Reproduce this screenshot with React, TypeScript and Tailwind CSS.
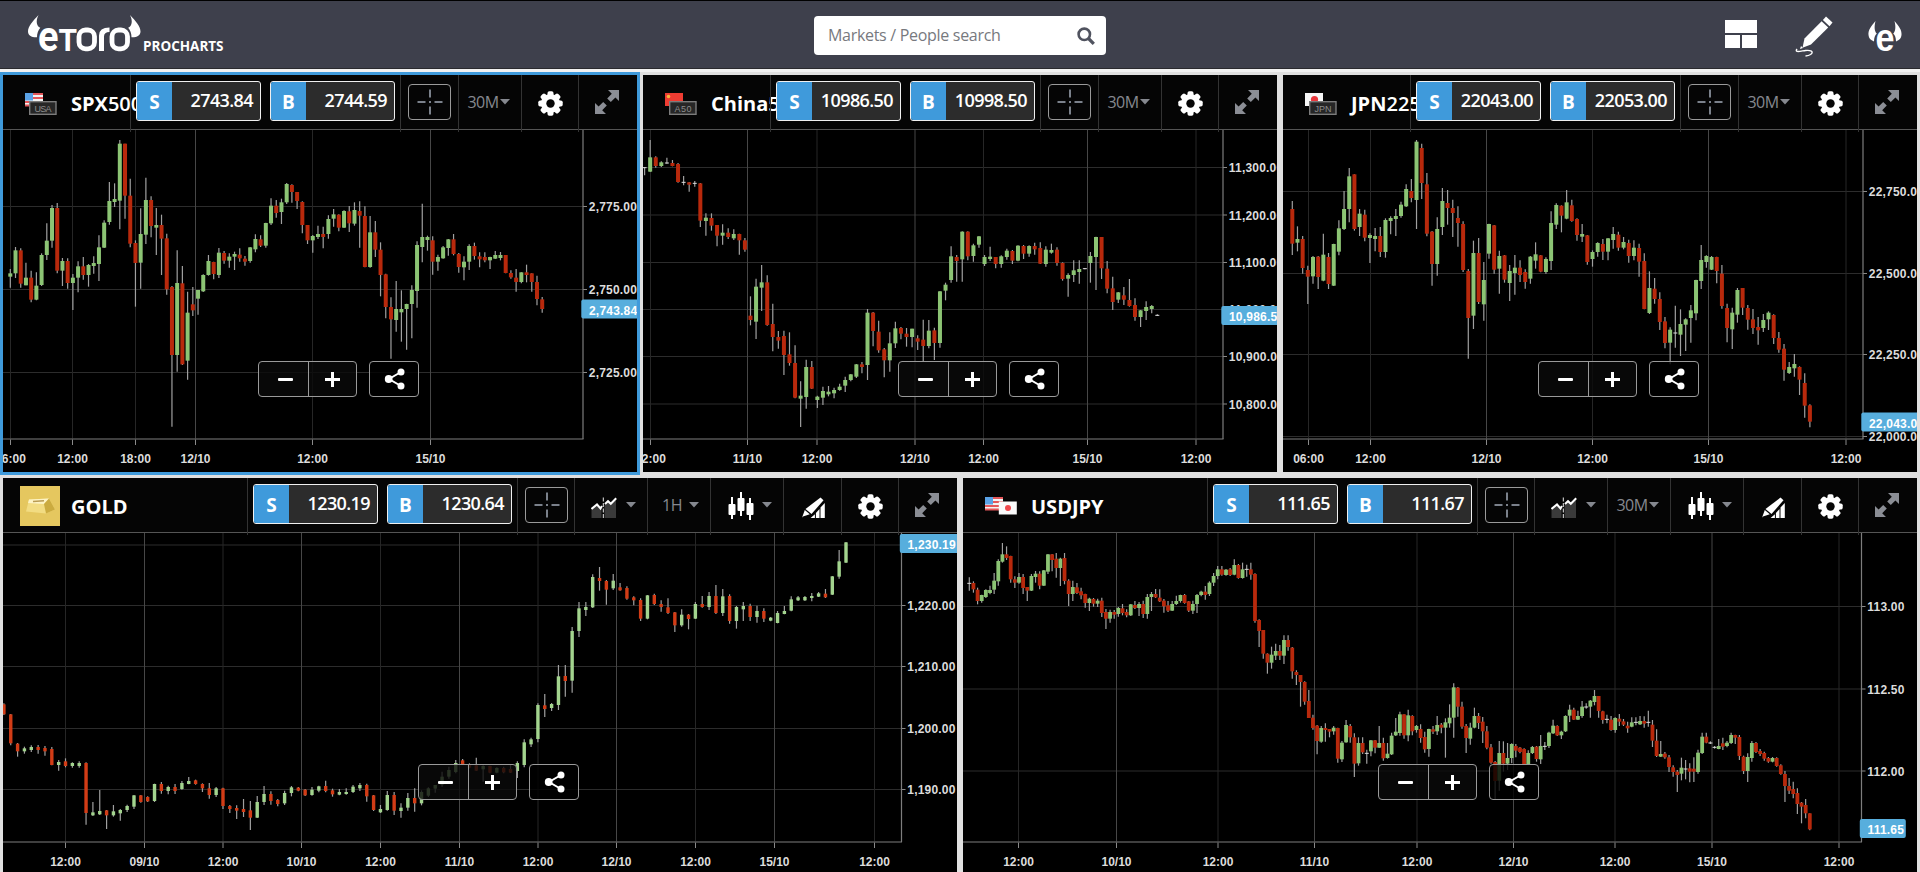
import React from 'react';

// [high, open, close, low] measured downwards, three units per pixel
type Candle = [number, number, number, number];

interface Tick {
  pos: number;
  label: string;
  strong?: boolean;
}

interface ChartData {
  candles: Candle[];
  from: number;
  to: number;
  bodyWidth: number;
  up: string;
  down: string;
  origin: number;
  axisX: number;
  axisY: number;
  times: Tick[];
  prices: Tick[];
  last: { y: number; label: string; width: number };
}

const spxCandles: Candle[] = [
  [417, 440, 430, 473], [351, 430, 361, 444], [355, 361, 461, 473], [398, 466, 443, 466], [422, 443, 509, 517],
  [427, 509, 467, 511], [370, 465, 375, 468], [280, 375, 332, 390], [225, 332, 234, 353], [219, 234, 422, 430],
  [384, 422, 393, 468], [385, 393, 459, 476], [432, 459, 443, 540], [394, 443, 409, 487], [381, 409, 435, 449],
  [402, 435, 405, 470], [379, 408, 399, 431], [316, 402, 352, 453], [271, 353, 278, 354], [156, 276, 213, 284],
  [160, 216, 207, 231], [30, 212, 41, 298], [41, 41, 197, 266], [146, 197, 341, 352], [331, 339, 399, 530],
  [235, 398, 312, 476], [143, 314, 210, 342], [199, 210, 288, 322], [234, 293, 285, 375], [254, 285, 326, 435],
  [311, 325, 478, 494], [468, 471, 675, 890], [361, 675, 459, 725], [408, 460, 703, 705], [485, 692, 548, 749],
  [471, 523, 541, 558], [480, 506, 480, 554], [433, 484, 435, 486], [375, 435, 393, 437], [395, 396, 432, 448],
  [354, 435, 368, 444], [363, 369, 392, 401], [370, 392, 380, 413], [365, 380, 372, 420], [355, 374, 385, 395],
  [378, 386, 395, 407], [351, 393, 352, 398], [313, 358, 327, 367], [316, 328, 347, 351], [278, 347, 279, 353],
  [205, 280, 227, 285], [210, 227, 249, 263], [206, 246, 217, 282], [159, 217, 162, 222], [163, 165, 186, 218],
  [186, 186, 213, 237], [214, 216, 285, 310], [285, 285, 331, 342], [315, 331, 318, 368], [287, 321, 312, 327],
  [290, 312, 321, 355], [256, 312, 267, 326], [237, 266, 253, 290], [253, 254, 293, 304], [241, 293, 243, 294],
  [228, 244, 280, 306], [217, 281, 240, 287], [214, 243, 257, 353], [229, 258, 411, 412], [258, 411, 307, 413],
  [273, 307, 359, 381], [337, 359, 435, 499], [431, 433, 531, 565], [502, 531, 568, 686], [453, 570, 537, 605],
  [481, 547, 537, 635], [521, 537, 522, 659], [466, 522, 480, 625], [334, 483, 345, 533], [221, 351, 321, 397],
  [317, 330, 321, 362], [319, 331, 395, 434], [374, 395, 381, 422], [348, 385, 352, 386], [327, 354, 328, 377],
  [312, 328, 372, 376], [369, 372, 411, 428], [379, 412, 395, 451], [343, 395, 348, 420], [338, 348, 378, 389],
  [367, 379, 388, 412], [367, 381, 391, 397], [380, 391, 381, 417], [363, 386, 375, 387], [366, 384, 375, 391],
  [375, 375, 429, 430], [421, 429, 442, 446], [417, 443, 456, 485], [427, 456, 427, 460], [404, 427, 435, 457],
  [430, 430, 456, 485], [437, 456, 507, 526], [501, 508, 537, 548],
];

const chinaCandles: Candle[] = [
  [111, 113, 113, 136], [30, 125, 82, 126], [79, 82, 108, 113], [94, 108, 97, 111], [83, 99, 99, 101],
  [90, 99, 108, 109], [99, 102, 156, 158], [138, 157, 157, 166], [156, 157, 164, 185], [153, 160, 160, 170],
  [159, 160, 272, 291], [250, 273, 263, 317], [250, 264, 287, 302], [285, 285, 317, 349], [283, 317, 308, 344],
  [295, 308, 321, 327], [298, 325, 312, 330], [311, 312, 331, 374], [324, 331, 359, 365], [499, 557, 570, 586],
  [446, 575, 470, 627], [405, 473, 457, 543], [436, 457, 585, 587], [521, 582, 621, 664], [603, 621, 632, 656],
  [602, 618, 675, 735], [607, 673, 699, 707], [646, 699, 803, 805], [754, 806, 797, 891], [689, 801, 711, 836],
  [693, 711, 776, 777], [797, 810, 800, 834], [770, 803, 783, 825], [768, 793, 785, 799], [773, 790, 780, 805],
  [761, 780, 770, 782], [740, 767, 750, 786], [732, 750, 733, 754], [702, 740, 703, 744], [696, 703, 711, 730],
  [537, 705, 548, 750], [546, 548, 603, 649], [572, 605, 661, 668], [654, 658, 691, 742], [607, 691, 640, 725],
  [575, 640, 595, 654], [591, 594, 611, 628], [594, 611, 621, 650], [596, 621, 596, 652], [616, 625, 635, 660],
  [569, 629, 648, 696], [570, 648, 602, 655], [593, 601, 639, 690], [483, 639, 484, 653], [458, 482, 464, 511],
  [349, 450, 379, 458], [375, 381, 393, 455], [304, 388, 305, 455], [304, 305, 379, 391], [341, 378, 346, 395],
  [318, 344, 319, 353], [375, 402, 381, 408], [350, 387, 380, 393], [381, 381, 402, 415], [376, 402, 379, 413],
  [356, 381, 362, 389], [360, 363, 392, 402], [346, 392, 347, 394], [345, 348, 371, 387], [346, 371, 348, 380],
  [338, 348, 358, 374], [337, 354, 401, 402], [349, 402, 359, 410], [341, 368, 360, 371], [352, 359, 399, 407],
  [397, 399, 447, 452], [430, 446, 435, 500], [391, 435, 421, 456], [391, 426, 417, 461], [414, 416, 416, 418],
  [366, 399, 378, 458], [320, 381, 321, 480], [321, 321, 415, 447], [393, 416, 476, 490], [440, 475, 516, 540],
  [486, 509, 487, 519], [471, 496, 509, 525], [447, 510, 528, 530], [505, 525, 561, 572], [540, 561, 541, 591],
  [514, 543, 531, 570], [525, 537, 528, 550], [553, 556, 556, 558],
];

const japanCandles: Candle[] = [
  [213, 237, 341, 375], [289, 338, 327, 364], [318, 327, 414, 431], [407, 420, 440, 522], [378, 439, 381, 461],
  [378, 380, 441, 477], [311, 452, 374, 454], [369, 381, 462, 477], [341, 467, 342, 468], [271, 365, 295, 376],
  [183, 297, 237, 300], [114, 237, 139, 277], [133, 133, 297, 302], [237, 291, 251, 318], [239, 254, 323, 334],
  [310, 324, 315, 399], [294, 327, 318, 364], [291, 318, 366, 381], [265, 366, 270, 383], [259, 273, 264, 313],
  [237, 267, 258, 318], [215, 258, 224, 263], [163, 229, 177, 231], [147, 183, 204, 217], [30, 210, 35, 297],
  [41, 54, 159, 207], [129, 163, 311, 319], [303, 305, 402, 467], [262, 402, 297, 437], [174, 291, 213, 315],
  [180, 219, 234, 284], [209, 234, 249, 321], [229, 264, 279, 350], [274, 282, 420, 426], [417, 423, 564, 686],
  [332, 557, 369, 597], [324, 369, 516, 522], [396, 523, 450, 572], [281, 371, 282, 386], [285, 286, 419, 431],
  [362, 416, 378, 491], [375, 376, 449, 458], [405, 459, 423, 513], [375, 429, 413, 494], [391, 413, 435, 456],
  [418, 426, 456, 476], [378, 446, 380, 461], [337, 392, 373, 416], [375, 376, 425, 427], [382, 426, 387, 431],
  [244, 393, 279, 420], [220, 284, 225, 297], [226, 227, 257, 307], [180, 266, 217, 268], [209, 226, 273, 275],
  [265, 267, 315, 332], [282, 320, 312, 336], [315, 316, 396, 404], [361, 387, 366, 410], [337, 366, 339, 380],
  [327, 342, 365, 390], [324, 365, 325, 391], [291, 330, 312, 356], [305, 314, 353, 362], [321, 353, 336, 358],
  [329, 339, 378, 398], [331, 378, 353, 391], [341, 354, 395, 440], [370, 393, 537, 538], [424, 549, 474, 552],
  [444, 476, 507, 521], [487, 507, 576, 600], [561, 574, 639, 655], [592, 638, 599, 703], [527, 609, 609, 653],
  [538, 614, 582, 678], [565, 584, 568, 663], [525, 564, 541, 638], [449, 550, 450, 571], [345, 453, 390, 477],
  [376, 396, 378, 413], [378, 419, 381, 420], [380, 381, 423, 460], [405, 431, 528, 536], [521, 534, 594, 637],
  [533, 598, 548, 657], [474, 554, 480, 578], [474, 474, 533, 555], [525, 534, 569, 599], [537, 568, 594, 612],
  [561, 591, 601, 644], [552, 594, 570, 606], [544, 568, 548, 600], [553, 555, 624, 642], [606, 624, 659, 668],
  [642, 656, 719, 752], [696, 729, 711, 732], [672, 715, 702, 740], [709, 711, 749, 795], [730, 759, 827, 863],
  [823, 826, 875, 892],
];

const goldCandles: Candle[] = [
  [700, 703, 733, 735], [732, 733, 820, 826], [819, 821, 844, 860], [830, 844, 835, 851], [826, 840, 831, 846],
  [825, 831, 840, 851], [828, 834, 844, 857], [831, 837, 885, 886], [870, 885, 876, 902], [865, 874, 888, 892],
  [877, 888, 879, 893], [874, 888, 879, 893], [877, 879, 1029, 1064], [996, 1036, 1027, 1038], [960, 1033, 1023, 1035],
  [1020, 1021, 1036, 1077], [1005, 1036, 1024, 1040], [1017, 1030, 1020, 1052], [1004, 1020, 1008, 1026], [975, 1010, 976, 1017],
  [975, 976, 996, 998], [979, 981, 994, 996], [941, 993, 942, 996], [936, 942, 963, 971], [947, 963, 951, 973],
  [942, 951, 963, 972], [933, 957, 939, 959], [921, 942, 933, 943], [929, 931, 942, 944], [940, 942, 955, 966],
  [939, 955, 975, 986], [951, 975, 955, 981], [953, 955, 1008, 1017], [1005, 1008, 1017, 1029], [1006, 1014, 1022, 1047],
  [987, 1017, 1026, 1041], [993, 1021, 1043, 1080], [978, 1043, 996, 1044], [948, 996, 972, 1005], [964, 972, 993, 1004],
  [987, 990, 1002, 1009], [962, 1000, 969, 1005], [948, 969, 952, 979], [951, 953, 962, 964], [957, 959, 976, 978],
  [951, 975, 959, 977], [947, 962, 949, 967], [932, 948, 963, 967], [956, 961, 973, 980], [957, 974, 966, 976],
  [955, 972, 966, 974], [945, 966, 950, 969], [939, 955, 945, 963], [941, 945, 979, 995], [975, 976, 1020, 1023],
  [1005, 1027, 1017, 1029], [963, 1020, 975, 1022], [966, 975, 1022, 1035], [1000, 1023, 1013, 1043], [969, 1013, 984, 1022],
  [955, 984, 1000, 1025], [961, 1000, 966, 1006], [952, 977, 955, 981], [945, 956, 945, 968], [905, 944, 920, 950],
  [890, 920, 900, 926], [870, 906, 879, 910], [867, 871, 882, 884], [880, 885, 893, 895], [863, 886, 902, 903],
  [886, 898, 888, 935], [887, 888, 908, 910], [892, 908, 894, 910], [890, 894, 907, 910], [885, 897, 908, 909],
  [874, 903, 879, 924], [808, 885, 817, 892], [803, 823, 808, 831], [700, 807, 705, 817], [672, 706, 717, 741],
  [699, 714, 702, 723], [585, 705, 619, 720], [585, 618, 633, 680], [471, 632, 483, 668], [396, 483, 415, 501],
  [396, 420, 411, 438], [313, 412, 321, 414], [291, 324, 333, 362], [330, 333, 359, 404], [312, 355, 332, 360],
  [339, 352, 361, 362], [349, 354, 386, 389], [379, 382, 391, 406], [385, 390, 446, 453], [375, 446, 376, 448],
  [371, 375, 402, 405], [391, 402, 411, 425], [385, 412, 429, 432], [426, 427, 466, 486], [418, 466, 434, 470],
  [432, 434, 447, 478], [396, 446, 402, 447], [378, 402, 411, 413], [366, 411, 378, 420], [345, 378, 429, 432],
  [357, 429, 379, 438], [373, 378, 453, 461], [408, 453, 411, 476], [396, 418, 408, 453], [401, 408, 441, 453],
  [407, 441, 423, 458], [415, 423, 446, 456], [441, 452, 443, 454], [423, 459, 429, 460], [408, 432, 423, 433],
  [379, 422, 388, 424], [378, 391, 382, 393], [378, 391, 381, 393], [369, 384, 378, 394], [366, 380, 370, 381],
  [357, 371, 382, 384], [318, 374, 319, 375], [240, 320, 274, 326], [216, 278, 217, 279],
];

const usdjpyCandles: Candle[] = [
  [142, 160, 160, 182], [154, 159, 178, 188], [173, 179, 213, 223], [194, 213, 195, 218], [178, 201, 180, 204],
  [167, 189, 180, 193], [129, 179, 152, 192], [88, 154, 93, 167], [39, 95, 73, 98], [49, 73, 84, 90],
  [77, 78, 148, 158], [139, 148, 158, 174], [129, 158, 141, 161], [132, 141, 174, 192], [171, 171, 182, 213],
  [132, 182, 138, 183], [123, 141, 131, 158], [124, 131, 167, 178], [120, 167, 121, 168], [72, 125, 73, 132],
  [72, 73, 90, 124], [69, 86, 114, 143], [83, 114, 86, 168], [69, 84, 153, 163], [148, 152, 192, 228],
  [152, 192, 171, 213], [159, 172, 189, 192], [173, 184, 196, 208], [191, 192, 219, 233], [203, 219, 206, 243],
  [204, 207, 221, 230], [206, 221, 212, 231], [203, 212, 249, 261], [237, 246, 266, 297], [239, 266, 246, 278],
  [240, 246, 254, 266], [231, 252, 234, 260], [222, 235, 249, 256], [238, 246, 256, 262], [222, 256, 223, 258],
  [213, 225, 234, 237], [216, 234, 222, 258], [212, 222, 252, 264], [192, 252, 201, 266], [186, 201, 192, 243],
  [177, 192, 202, 204], [178, 203, 214, 216], [207, 212, 229, 248], [213, 226, 242, 246], [213, 242, 222, 243],
  [197, 222, 213, 225], [194, 213, 195, 218], [192, 195, 219, 221], [213, 214, 242, 246], [212, 242, 222, 252],
  [192, 222, 195, 249], [182, 195, 185, 199], [168, 185, 195, 209], [154, 192, 158, 198], [129, 158, 138, 168],
  [108, 138, 118, 148], [108, 118, 134, 137], [117, 135, 119, 137], [114, 118, 135, 138], [88, 134, 105, 136],
  [102, 105, 144, 146], [98, 144, 118, 146], [104, 118, 118, 140], [98, 118, 134, 149], [130, 132, 273, 278],
  [268, 270, 303, 351], [300, 300, 371, 386], [370, 371, 398, 431], [350, 398, 374, 416], [341, 377, 363, 390],
  [345, 363, 377, 390], [316, 377, 330, 402], [316, 330, 351, 362], [351, 353, 424, 446], [421, 426, 435, 465],
  [435, 435, 456, 530], [454, 456, 515, 524], [480, 513, 564, 564], [554, 563, 594, 599], [585, 587, 633, 673],
  [588, 635, 594, 638], [580, 594, 600, 635], [597, 597, 605, 622], [588, 604, 593, 614], [593, 594, 686, 698],
  [633, 688, 638, 696], [570, 637, 585, 638], [582, 588, 622, 638], [610, 622, 701, 741], [622, 700, 639, 707],
  [622, 639, 667, 672], [659, 670, 670, 701], [630, 664, 631, 679], [630, 631, 653, 670], [588, 653, 639, 654],
  [623, 639, 685, 692], [639, 684, 671, 686], [608, 673, 617, 675], [564, 616, 605, 618], [545, 609, 553, 617],
  [553, 553, 616, 626], [539, 616, 556, 634], [556, 558, 604, 616], [585, 600, 588, 608], [583, 597, 624, 638],
  [605, 621, 658, 668], [596, 657, 597, 680], [588, 598, 605, 612], [558, 604, 585, 615], [579, 584, 593, 610],
  [565, 593, 577, 683], [523, 580, 563, 593], [460, 563, 472, 623], [471, 473, 530, 560], [515, 530, 590, 596],
  [582, 588, 624, 669], [578, 626, 593, 644], [533, 593, 558, 595], [549, 558, 579, 597], [561, 575, 604, 639],
  [588, 604, 653, 658], [642, 652, 698, 701], [693, 696, 753, 807], [633, 752, 669, 782], [634, 669, 701, 725],
  [639, 701, 684, 720], [640, 684, 642, 700], [642, 648, 662, 682], [651, 653, 666, 670], [655, 657, 702, 704],
  [661, 702, 669, 705], [648, 669, 651, 672], [648, 650, 687, 695], [615, 688, 648, 702], [636, 649, 649, 660],
  [605, 648, 608, 654], [569, 610, 587, 612], [586, 588, 616, 618], [602, 616, 605, 627], [556, 604, 558, 606],
  [524, 557, 539, 576], [533, 539, 569, 570], [542, 569, 558, 570], [513, 558, 530, 563], [520, 531, 531, 536],
  [510, 530, 512, 563], [480, 516, 498, 526], [498, 498, 543, 563], [542, 544, 570, 581], [554, 568, 568, 580],
  [558, 569, 600, 602], [562, 600, 564, 608], [552, 566, 575, 588], [567, 574, 584, 588], [575, 587, 595, 608],
  [562, 590, 577, 592], [562, 577, 577, 586], [558, 583, 573, 585], [559, 573, 581, 593], [542, 577, 577, 590],
  [570, 584, 632, 651], [598, 632, 678, 681], [633, 680, 672, 681], [666, 671, 682, 686], [675, 682, 711, 726],
  [706, 712, 726, 740], [720, 725, 735, 786], [683, 731, 713, 751], [690, 717, 717, 748], [700, 715, 725, 757],
  [682, 716, 725, 756], [659, 726, 668, 731], [608, 669, 620, 672], [608, 620, 638, 640], [634, 639, 639, 642],
  [648, 652, 652, 656], [627, 657, 648, 658], [623, 640, 650, 660], [633, 648, 638, 652], [608, 639, 615, 642],
  [614, 615, 623, 642], [615, 621, 678, 690], [677, 680, 723, 732], [670, 723, 681, 756], [633, 684, 639, 695],
  [636, 639, 666, 669], [657, 663, 672, 678], [665, 669, 686, 692], [681, 684, 695, 698], [681, 695, 684, 697],
  [682, 684, 708, 710], [703, 706, 732, 734], [723, 732, 768, 816], [744, 768, 782, 792], [755, 777, 792, 805],
  [775, 789, 822, 852], [816, 818, 830, 880], [807, 825, 850, 865], [850, 850, 898, 901],
];

const spx: ChartData = {
  candles: spxCandles, from: 10.3, to: 542.2, bodyWidth: 4, up: '#8cc474', down: '#b8290c',
  origin: 0, axisX: 583, axisY: 309,
  times: [
    { pos: 10.5, label: '06:00' }, { pos: 72.5, label: '12:00' }, { pos: 135.5, label: '18:00' },
    { pos: 195.5, label: '12/10', strong: true }, { pos: 312.5, label: '12:00' }, { pos: 430.5, label: '15/10', strong: true },
  ],
  prices: [{ pos: 76.5, label: '2,775.00' }, { pos: 159.5, label: '2,750.00' }, { pos: 242.5, label: '2,725.00' }],
  last: { y: 179, label: '2,743.84', width: 70 },
};

const china: ChartData = {
  candles: chinaCandles, from: 4.6, to: 517.3, bodyWidth: 4, up: '#8cc474', down: '#b8290c',
  origin: 0, axisX: 583, axisY: 309,
  times: [
    { pos: 10.5, label: '12:00' }, { pos: 107.5, label: '11/10', strong: true }, { pos: 177, label: '12:00' },
    { pos: 275, label: '12/10', strong: true }, { pos: 343.5, label: '12:00' }, { pos: 447.5, label: '15/10', strong: true },
    { pos: 556, label: '12:00' },
  ],
  prices: [
    { pos: 37.5, label: '11,300.00' }, { pos: 85, label: '11,200.00' }, { pos: 132.5, label: '11,100.00' },
    { pos: 179.5, label: '11,000.00' }, { pos: 226.5, label: '10,900.00' }, { pos: 274, label: '10,800.00' },
  ],
  last: { y: 185.5, label: '10,986.50', width: 70 },
};

const japan: ChartData = {
  candles: japanCandles, from: 12.3, to: 529.9, bodyWidth: 4, up: '#8cc474', down: '#b8290c',
  origin: 0, axisX: 583, axisY: 309,
  times: [
    { pos: 28.5, label: '06:00' }, { pos: 90.5, label: '12:00' }, { pos: 206.5, label: '12/10', strong: true },
    { pos: 312.5, label: '12:00' }, { pos: 428.5, label: '15/10', strong: true }, { pos: 566, label: '12:00' },
  ],
  prices: [
    { pos: 61.5, label: '22,750.00' }, { pos: 143.5, label: '22,500.00' }, { pos: 224.5, label: '22,250.00' },
    { pos: 306.5, label: '22,000.00' },
  ],
  last: { y: 292, label: '22,043.00', width: 70 },
};

const gold: ChartData = {
  candles: goldCandles, from: 3.9, to: 846, bodyWidth: 3.4, up: '#a3d48e', down: '#d23c16',
  origin: 63, axisX: 901.5, axisY: 372,
  times: [
    { pos: 65.5, label: '12:00' }, { pos: 144.5, label: '09/10', strong: true }, { pos: 223, label: '12:00' },
    { pos: 301.5, label: '10/10', strong: true }, { pos: 380.5, label: '12:00' }, { pos: 459.5, label: '11/10', strong: true },
    { pos: 538, label: '12:00' }, { pos: 616.5, label: '12/10', strong: true }, { pos: 695.5, label: '12:00' },
    { pos: 774.5, label: '15/10', strong: true }, { pos: 874.5, label: '12:00' },
  ],
  prices: [
    { pos: 75, label: '1,230.00' }, { pos: 135.5, label: '1,220.00' }, { pos: 196.5, label: '1,210.00' },
    { pos: 258.5, label: '1,200.00' }, { pos: 319.5, label: '1,190.00' },
  ],
  last: { y: 73.5, label: '1,230.19', width: 70 },
};

const usdjpy: ChartData = {
  candles: usdjpyCandles, from: 9.3, to: 849.8, bodyWidth: 3.8, up: '#8cc474', down: '#b8290c',
  origin: 3, axisX: 901.5, axisY: 312,
  times: [
    { pos: 58.5, label: '12:00' }, { pos: 156.5, label: '10/10', strong: true }, { pos: 258, label: '12:00' },
    { pos: 354.5, label: '11/10', strong: true }, { pos: 457, label: '12:00' }, { pos: 553.5, label: '12/10', strong: true },
    { pos: 655, label: '12:00' }, { pos: 752, label: '15/10', strong: true }, { pos: 879, label: '12:00' },
  ],
  prices: [{ pos: 76.5, label: '113.00' }, { pos: 159, label: '112.50' }, { pos: 241, label: '112.00' }],
  last: { y: 298.5, label: '111.65', width: 46 },
};

const Chart: React.FC<{ data: ChartData; width: number; height: number }> = ({ data, width, height }) => {
  const { candles, from, to, bodyWidth, up, down, origin, axisX, axisY, times, prices, last } = data;
  const step = (to - from) / (candles.length - 1);

  return (
    <svg
      width={width}
      height={height}
      viewBox={`3 ${origin} ${width} ${height}`}
      className="block bg-black font-['Liberation_Sans',Arial,sans-serif] text-[12px] font-bold"
    >
      {prices.map((p) => (
        <g key={p.label}>
          <line x1={3} x2={axisX} y1={p.pos} y2={p.pos} stroke="#2c2c2c" />
          <line x1={axisX} x2={axisX + 4} y1={p.pos} y2={p.pos} stroke="#8a8a8a" />
        </g>
      ))}
      {times.map((t, i) => (
        <g key={i}>
          <line x1={t.pos} x2={t.pos} y1={origin} y2={axisY} stroke={t.strong ? '#474747' : '#262626'} />
          <line x1={t.pos} x2={t.pos} y1={axisY} y2={axisY + 6} stroke="#8a8a8a" />
          <text x={t.pos} y={axisY + 23.5} textAnchor="middle" fill="#dcdcdc">{t.label}</text>
        </g>
      ))}

      {candles.map(([high, open, close, low], i) => {
        const x = from + i * step;
        const top = Math.min(open, close) / 3;
        const bodyHeight = Math.abs(open - close) / 3;
        return (
          <g key={i}>
            <line x1={x} x2={x} y1={high / 3} y2={low / 3} stroke="#a0a0a0" strokeWidth={1.2} />
            {bodyHeight === 0 ? (
              <rect x={x - 2} y={top - 0.5} width={4} height={1} fill="#dddddd" />
            ) : (
              <rect x={x - bodyWidth / 2} y={top} width={bodyWidth} height={bodyHeight} fill={close < open ? up : down} />
            )}
          </g>
        );
      })}

      <line x1={3} x2={axisX + 0.5} y1={axisY} y2={axisY} stroke="#555555" strokeWidth={1.6} />
      <line x1={axisX} x2={axisX} y1={origin} y2={axisY} stroke="#7d7d7d" strokeWidth={1.2} />
      {prices.map((p) => (
        <text key={p.label} x={axisX + 5.8} y={p.pos + 4.5} fill="#dcdcdc" letterSpacing={0.2}>{p.label}</text>
      ))}
      <rect x={axisX - 1.7} y={last.y - 9.5} width={last.width} height={19} rx={2} fill="#57aedd" />
      <text x={axisX + 6} y={last.y + 5.5} fill="#ffffff" letterSpacing={0.2}>{last.label}</text>
    </svg>
  );
};

const Caret = () => (
  <svg width="10" height="6" viewBox="0 0 10 6" className="shrink-0">
    <path d="M0 0h10L5 5.4z" fill="#85888f" />
  </svg>
);

const GearIcon = () => (
  <svg width="25" height="25" viewBox="-12.5 -12.5 25 25">
    {[0, 45, 90, 135].map((a) => (
      <rect key={a} x="-3" y="-12.2" width="6" height="24.4" rx="1.8" fill="#fff" transform={`rotate(${a})`} />
    ))}
    <circle r="9.6" fill="#fff" />
    <circle r="4.2" fill="#060606" />
  </svg>
);

const ExpandIcon = () => (
  <svg width="24" height="24" viewBox="0 0 24 24" fill="#8b8e95">
    <path d="M13 0h11v11l-3.6-3.6-4.6 4.6-3.6-3.6 4.6-4.6z" />
    <path d="M11 24H0V13l3.6 3.6 4.6-4.6 3.6 3.6-4.6 4.6z" />
  </svg>
);

const CrosshairIcon = () => (
  <svg width="26" height="26" viewBox="0 0 26 26" stroke="#7b818b" strokeWidth="2">
    <path d="M13 0.5v8M13 17.500v8M0.5 13h8M17.5 13h8" />
    <path d="M12 13h2" />
  </svg>
);

const CompareIcon = () => (
  <svg width="26" height="22" viewBox="0 0 26 22" fill="none">
    <path d="M0.5 12.5L6 8l3 4 1.5-1v10H0.5zM13.5 8L17 5l3 2 5-4.500V21H13.500z" fill="#3a3a3a" />
    <path d="M0.5 12L6 7.500l3.500 4L11 9" stroke="#fff" strokeWidth="2" />
    <path d="M14 7l3-2.800 2.800 2.600L25.200 1.200" stroke="#fff" strokeWidth="2" />
    <path d="M12.300 0.500v21.500" stroke="#e8e8e8" strokeDasharray="4 1.500" />
  </svg>
);

const CandlesIcon = () => (
  <svg width="26" height="28" viewBox="0 0 26 28" fill="#fff">
    <path d="M3 5h2v22H3zM12 0h2v24h-2zM21 6h2v22h-2z" />
    <rect x="0.500" y="12" width="7" height="11" rx="1" />
    <rect x="9.500" y="6" width="7" height="13" rx="1" />
    <rect x="18.500" y="11" width="7" height="12" rx="1" />
  </svg>
);

const DrawIcon = () => (
  <svg width="24" height="22" viewBox="0 0 24 22" fill="#fff">
    <path d="M18.500 0.500l3 2.800L9.500 17 3.500 12z" />
    <path d="M2.800 13l5 4.200L1 19.500l-1 1.200z" />
    <path d="M22.800 6v15h-4.300V10.500zM17.500 12v9h-3.600v-5zM12.900 17.200V21H8.600z" />
  </svg>
);

const ShareIcon = () => (
  <svg width="22" height="22" viewBox="0 0 22 22">
    <path d="M17 4L5 11l12 7" stroke="#fff" strokeWidth="2" fill="none" />
    <circle cx="4.700" cy="11" r="3.900" fill="#fff" />
    <circle cx="17" cy="4" r="3.500" fill="#fff" />
    <circle cx="17" cy="18" r="3.500" fill="#fff" />
  </svg>
);

const UsFlag = () => (
  <>
    <rect width="18" height="13" fill="#f3f3f3" />
    <path d="M0 1h18M0 5h18M0 9h18M0 12.500h18" stroke="#e4575a" strokeWidth="1.800" />
    <rect width="8" height="7.500" fill="#5aa2e6" />
  </>
);

const IndexIcon: React.FC<{ flag: 'us' | 'cn' | 'jp'; code: string }> = ({ flag, code }) => (
  <svg width="32" height="22" viewBox="0 0 32 22">
    {flag === 'us' && <UsFlag />}
    {flag === 'cn' && (
      <>
        <rect width="18" height="13" fill="#ee3c32" />
        <circle cx="3.500" cy="3.500" r="1.800" fill="#f6b93c" />
      </>
    )}
    {flag === 'jp' && (
      <>
        <rect width="18" height="13" fill="#f6f6f6" />
        <circle cx="9.500" cy="6.500" r="3.600" fill="#e8363c" />
      </>
    )}
    <rect x="4.700" y="8.700" width="26.300" height="12.600" fill="#262626" stroke="#7c7c7c" strokeWidth="1.400" />
    <text x="18" y="18.500" textAnchor="middle" textLength="17" fill="#8d8d8d" fontSize="9" fontFamily="Liberation Sans, sans-serif">
      {code}
    </text>
  </svg>
);

const GoldIcon = () => (
  <svg width="40" height="40" viewBox="0 0 40 40">
    <rect width="40" height="40" fill="#e5c75f" />
    <path d="M9 13.500l20-1 6 11-9 4-20-2z" fill="#f2dc82" />
    <path d="M9 13.500l20-1-5 5.500-16-1z" fill="#fdf3c4" />
    <path d="M29 12.500l6 11-9 4-2-9.500z" fill="#cbab3f" />
    <path d="M13 15.500l11-.8" stroke="#b99b52" strokeWidth="1.500" />
  </svg>
);

const UsdJpyIcon = () => (
  <svg width="32" height="18" viewBox="0 0 32 18">
    <UsFlag />
    <rect x="13.800" y="4.500" width="18" height="13" fill="#fafafa" />
    <circle cx="23" cy="11" r="3" fill="#f0484c" />
  </svg>
);

const Cell: React.FC<{ className: string; children: React.ReactNode }> = ({ className, children }) => (
  <div className={`relative h-[57px] shrink-0 border-l border-[#333333] ${className}`}>{children}</div>
);

const PriceButton: React.FC<{ side: string; price: string }> = ({ side, price }) => (
  <button className="flex h-10 w-[125px] overflow-hidden rounded-[3px] border border-[#f0f0f0] bg-[#2c2c2c] text-white">
    <span className="flex h-full w-[35px] items-center justify-center bg-[#3f9adb] pt-0.5 text-[19px] font-bold">{side}</span>
    <span className="flex-1 pr-[7px] pt-[4px] text-right text-[18px] leading-7 font-semibold tracking-[-0.6px]">{price}</span>
  </button>
);

interface PanelProps {
  icon: React.ReactNode;
  title: string;
  digits?: string;
  sell: string;
  buy: string;
  timeframe: string;
  data: ChartData;
  wide?: boolean;
  active?: boolean;
}

const Panel: React.FC<PanelProps> = ({ icon, title, digits, sell, buy, timeframe, data, wide, active }) => (
  <section
    className={`relative overflow-hidden border-[3px] bg-[#050505] ${active ? 'border-[#3f9adb]' : 'border-[#e0e0e0]'} ${
      wide ? 'h-[400px] w-[960px] border-b-0' : 'h-[403px] w-[640px]'
    }`}
  >
    <div className="flex h-[55px] border-b border-[#555555]">
      <div className="flex h-[54px] w-0 flex-1 items-center pt-1">
        <div className={`flex w-[68px] shrink-0 items-center ${wide ? 'pb-[3px]' : ''} ${title === 'GOLD' ? 'pl-[17px]' : 'pl-[22px]'}`}>
          {icon}
        </div>
        <h2 className="text-[20px] font-bold whitespace-nowrap text-white">
          {title}
          <span className="font-semibold">{digits}</span>
        </h2>
      </div>

      <Cell className="flex w-[270px] gap-[9px] pt-[6px] pl-[5px]">
        <PriceButton side="S" price={sell} />
        <PriceButton side="B" price={buy} />
      </Cell>
      <Cell className={wide ? 'w-[57px] pt-[9px] pl-[7px]' : 'w-[58px] pt-[9px] pl-[7px]'}>
        <button className="flex h-9 w-[43px] items-center justify-center rounded-[4px] border border-[#9a9a9a]">
          <CrosshairIcon />
        </button>
      </Cell>
      {wide && (
        <Cell className="flex w-[73px] pl-4">
          <span className="mt-[19px]"><CompareIcon /></span>
          <span className="mt-[24px] ml-[9px]"><Caret /></span>
        </Cell>
      )}
      <Cell className="flex w-[63px] pl-[7px]">
        <span className="mt-[15px] w-[34px] text-center text-[16px] leading-6 font-medium tracking-[-0.5px] text-[#85888f]">
          {timeframe}
        </span>
        <span className="mt-[24px]"><Caret /></span>
      </Cell>
      {wide && (
        <>
          <Cell className="flex w-[73px] pl-[17px]">
            <span className="mt-[14px]"><CandlesIcon /></span>
            <span className="mt-[24px] ml-[8px]"><Caret /></span>
          </Cell>
          <Cell className="w-[58px] pt-[19px] pl-[18px]">
            <DrawIcon />
          </Cell>
        </>
      )}
      <Cell className="w-[57px] pt-[16px] pl-[16px]">
        <GearIcon />
      </Cell>
      <Cell className="w-[59px] pt-[15px] pl-[16px]">
        <ExpandIcon />
      </Cell>
    </div>

    <Chart data={data} width={wide ? 954 : 634} height={342} />

    {/* zoom and share controls float over the plot */}
    <div className="absolute inset-x-0 top-[286px] flex justify-center gap-[12px] pl-[37px]">
      <div className="flex h-9 w-[99px] rounded-[4px] border border-[#9a9a9a] bg-[#0a0a0a]/80">
        <button className="flex flex-1 items-center justify-center border-r border-[#9a9a9a]">
          <span className="ml-[3px] h-[3px] w-[15px] rounded-[1px] bg-white" />
        </button>
        <button className="flex w-[47px] items-center justify-center">
          <svg width="15" height="15" viewBox="0 0 15 15">
            <path d="M7.500 0v15M0 7.500h15" stroke="#fff" strokeWidth="3" />
          </svg>
        </button>
      </div>
      <button className="flex h-9 w-[50px] items-center justify-center rounded-[4px] border border-[#9a9a9a] bg-black/80 pl-[2px]">
        <ShareIcon />
      </button>
    </div>
  </section>
);

const Header = () => (
  <header className="flex h-[72px] items-start justify-between border-t border-b-[3px] border-t-black border-b-[#f2f2f2] bg-[#3e404c] shadow-[inset_0_-1px_0_#2a2a2e]">
    <div className="flex w-[600px] items-start pt-3 pl-7">
      <svg width="113" height="42" viewBox="0 0 113 42" fill="#fff">
        <path d="M10.500 2C5 8 0 13 0 18.500c0 4 3.500 6 9 5.800 0-4 1.200-7 3.300-9.500C8.500 13 7.500 8 10.500 2z" />
        <path d="M102 2c5.500 6 10.500 11 10.500 16.500 0 4-3.500 6-9 5.800 0-4-1.200-7-3.300-9.500C104 13 105 8 102 2z" />
        <g fontFamily="Roboto, sans-serif" fontWeight="700">
          <text x="10" y="37.500" fontSize="42" textLength="20.500" lengthAdjust="spacingAndGlyphs">e</text>
          <text x="30.500" y="37.700" fontSize="32" textLength="18.500" lengthAdjust="spacingAndGlyphs">T</text>
        </g>
        <rect x="51" y="17" width="15.500" height="18.800" rx="6.500" fill="none" stroke="#fff" strokeWidth="4.800" />
        <path d="M71 38V22.500q0-8 10.500-8v4.500q-5.500 0-5.500 4.500V38z" />
        <rect x="84" y="17" width="15.500" height="18.800" rx="6.500" fill="none" stroke="#fff" strokeWidth="4.800" />
      </svg>
      <span className="mt-[24px] ml-[2px] text-[13.500px] leading-[18px] font-bold text-white">PROCHARTS</span>
    </div>

    <div className="mt-[15px] flex h-[39px] w-[292px] items-center justify-between rounded-[4px] bg-white pr-[11px] pl-[14px]">
      <span className="pb-px text-[16px] tracking-[-0.3px] text-[#77797e]">Markets / People search</span>
      <svg width="18" height="18" viewBox="0 0 18 18" fill="none" stroke="#50535f">
        <circle cx="7.300" cy="7.300" r="5.700" strokeWidth="2.600" />
        <path d="M11.500 11.500l5.300 5.300" strokeWidth="3.200" />
      </svg>
    </div>

    <div className="flex w-[600px] items-start justify-end pt-[15px] pr-[17px]">
      <svg width="32" height="28" viewBox="0 0 32 28" fill="#fff" className="mt-1">
        <path d="M0 0h32v13H0zM0 15h15v13H0zM17 15h15v13H17z" />
      </svg>
      <svg width="38" height="41" viewBox="0 0 38 41" fill="#fff" className="ml-[38px]">
        <path d="M31 0.500l6.500 6-3 3.700-6.600-6.200z" />
        <path d="M26.600 5.300l6.600 6.200L16 28.500l-8.500 3.300L9.500 22.500z" />
        <path d="M6 30l-1 3 3-1z" />
        <path d="M2 33c-3 4 4 2 8.500 1.500 5-.5 9 1 5 4-1.500 1-3 1.300-5 1.500" fill="none" stroke="#fff" strokeWidth="1.400" />
      </svg>
      <svg width="34" height="34" viewBox="0 0 34 34" fill="#fff" className="ml-[35px] mr-px mt-1">
        <path d="M7.500 1C3 6.500 0 10 0.500 15c.3 3.500 2 5 5.500 6.500 .2-4 .8-6 2.800-8C6.500 11.500 6 7 7.500 1z" />
        <path d="M26.500 1C31 6.500 34 10 33.500 15c-.3 3.500-2 5-5.500 6.500-.2-4-.8-6-2.800-8C27.500 11.500 28 7 26.500 1z" />
        <text x="7.500" y="31" fontSize="38" fontWeight="700" textLength="19" lengthAdjust="spacingAndGlyphs" fontFamily="Liberation Sans, sans-serif">e</text>
      </svg>
    </div>
  </header>
);

const App = () => (
  <div className="h-[872px] w-[1920px] overflow-hidden bg-[#e0e0e0] font-['Open_Sans','Noto_Sans',sans-serif]">
    <Header />
    <main>
      <div className="flex">
        <Panel icon={<IndexIcon flag="us" code="USA" />} title="SPX" digits="500" sell="2743.84" buy="2744.59" timeframe="30M" data={spx} active />
        <Panel icon={<IndexIcon flag="cn" code="A50" />} title="China" digits="50" sell="10986.50" buy="10998.50" timeframe="30M" data={china} />
        <Panel icon={<IndexIcon flag="jp" code="JPN" />} title="JPN" digits="225" sell="22043.00" buy="22053.00" timeframe="30M" data={japan} />
      </div>
      <div className="flex">
        <Panel icon={<GoldIcon />} title="GOLD" sell="1230.19" buy="1230.64" timeframe="1H" data={gold} wide />
        <Panel icon={<UsdJpyIcon />} title="USDJPY" sell="111.65" buy="111.67" timeframe="30M" data={usdjpy} wide />
      </div>
    </main>
  </div>
);

export default App;
